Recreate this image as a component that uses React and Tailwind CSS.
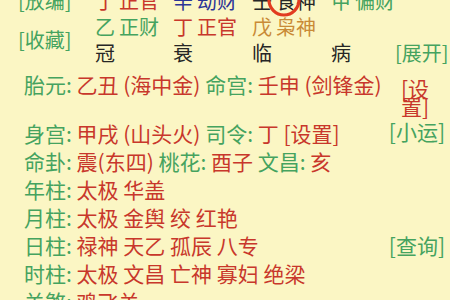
const G = ({ children }) => <span className="text-[#45a35f]">{children}</span>;
const R = ({ children }) => <span className="text-[#c8372b]">{children}</span>;

function Row({ children, right, rightClass = "" }) {
  return (
    <div className="flex items-center h-[28px] pl-[24px] pr-[5px] whitespace-nowrap">
      <div className="flex-1">{children}</div>
      {right && <div className={"text-[#45a35f] " + rightClass}>{right}</div>}
    </div>
  );
}

function Cell({ a, b, color }) {
  return (
    <div className={color}>
      {a}
      <span className="ml-[4px]">{b}</span>
    </div>
  );
}

export default function App() {
  return (
    <div className="relative w-[450px] h-[300px] overflow-hidden bg-[#fbf6c4] font-['Noto_Sans_CJK_SC','Noto_Sans',sans-serif] text-[21px]">
      <div className="-mt-[12px] grid grid-cols-[95px_78px_79px_79px_1fr_auto] auto-rows-[26px] items-center leading-[26px] whitespace-nowrap pr-[5px] text-[20px]">
        <div className="pl-[18px] text-[#45a35f]">[放编]</div>
        <Cell a="丁" b="正官" color="text-[#c8372b]" />
        <Cell a="辛" b="劫财" color="text-[#2b3497]" />
        <Cell a="壬" b="食神" color="text-[#262626]" />
        <Cell a="甲" b="偏财" color="text-[#45a35f]" />
        <div />
        <div className="row-span-2 pl-[18px] text-[#45a35f]">[收藏]</div>
        <Cell a="乙" b="正财" color="text-[#45a35f]" />
        <Cell a="丁" b="正官" color="text-[#c8372b]" />
        <Cell a="戊" b="枭神" color="text-[#c98a36]" />
        <div />
        <div />
        <div className="text-[#262626]">冠</div>
        <div className="text-[#262626]">衰</div>
        <div className="text-[#262626]">临</div>
        <div className="text-[#262626]">病</div>
        <div className="text-[#45a35f]">[展开]</div>
      </div>

      <div className="flex items-start pl-[24px] pr-[5px] pt-[8px] pb-[5px] leading-[20px] whitespace-nowrap">
        <div className="flex-1">
          <G>胎元:</G> <R>乙丑 (海中金)</R> <G>命宫:</G> <R>壬申 (剑锋金)</R>
        </div>
        <div className="mt-[5px] w-[44px] leading-[18px] whitespace-normal text-[#c8372b]">[设置]</div>
      </div>

      <Row right="[小运]" rightClass="-mt-[4px]">
        <G>身宫:</G> <R>甲戌 (山头火)</R> <G>司令:</G> <R>丁 [设置]</R>
      </Row>
      <Row>
        <G>命卦:</G> <R>震(东四)</R> <G>桃花:</G> <R>酉子</R> <G>文昌:</G> <R>亥</R>
      </Row>
      <Row>
        <G>年柱:</G> <R>太极 华盖</R>
      </Row>
      <Row>
        <G>月柱:</G> <R>太极 金舆 绞 红艳</R>
      </Row>
      <Row right="[查询]">
        <G>日柱:</G> <R>禄神 天乙 孤辰 八专</R>
      </Row>
      <Row>
        <G>时柱:</G> <R>太极 文昌 亡神 寡妇 绝梁</R>
      </Row>
      <Row>
        <G>关煞:</G> <R>鸡飞关</R>
      </Row>

      <svg className="absolute left-[264px] top-[-16px] w-[40px] h-[36px]" viewBox="0 0 40 36">
        <circle cx="20" cy="16" r="15" fill="none" stroke="#e23c20" strokeWidth="3.2" />
      </svg>
    </div>
  );
}
